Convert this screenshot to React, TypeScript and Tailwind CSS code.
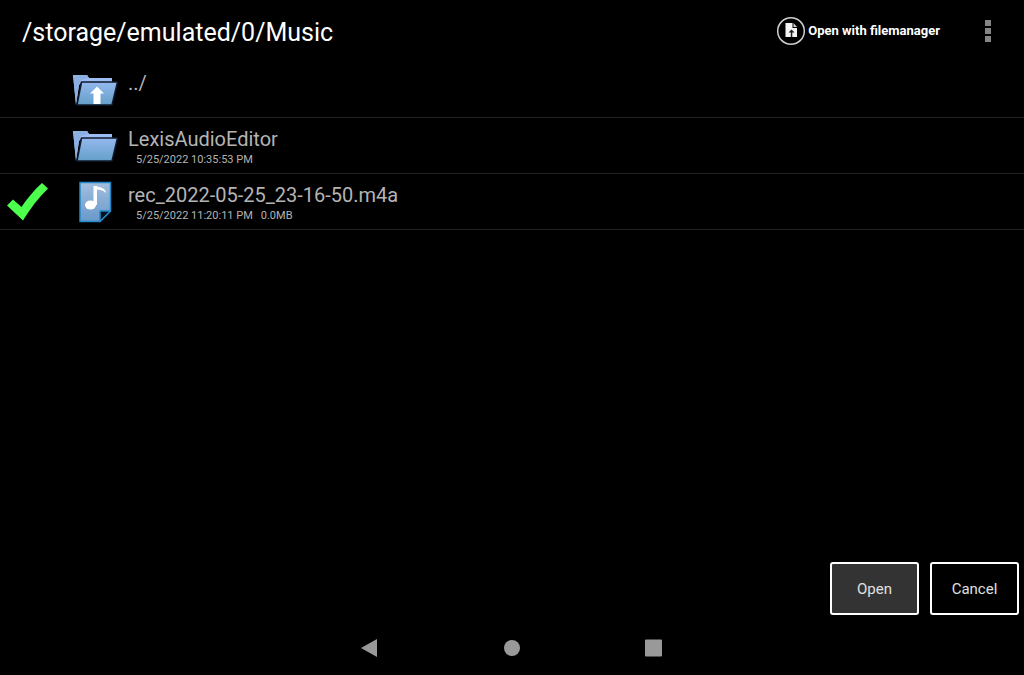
import type { ReactNode } from "react";

type Entry = {
  name: string;
  date?: string;
  size?: string;
  kind: "up" | "folder" | "audio";
  selected?: boolean;
};

const entries: Entry[] = [
  { name: "../", kind: "up" },
  { name: "LexisAudioEditor", date: "5/25/2022 10:35:53 PM", kind: "folder" },
  {
    name: "rec_2022-05-25_23-16-50.m4a",
    date: "5/25/2022 11:20:11 PM",
    size: "0.0MB",
    kind: "audio",
    selected: true,
  },
];

function FolderIcon({ up = false }: { up?: boolean }) {
  const id = up ? "folder-up" : "folder";
  return (
    <svg viewBox="0 0 46 34" className="h-[34px] w-[46px]" aria-hidden="true">
      <defs>
        <linearGradient id={id} x1="0" y1="0" x2="0" y2="1">
          <stop offset="0" stopColor="#94b8ee" />
          <stop offset="1" stopColor="#64a0c8" />
        </linearGradient>
      </defs>
      <path d="M1 2h14l2 3h23v4H10L7 12 4 32Z" fill="#9bbdf3" />
      <path d="M1 2 4 32l3-20 2-5 8-2-2-3Z" fill="#8db0e2" />
      <path d="M9.500 9H45.500L40 32H5Z" fill={`url(#${id})`} stroke="#111a2c" strokeWidth="1.500" strokeLinejoin="round" />
      {up && <path d="M25 13.500 32 20.500H28.500V31h-7V20.500H18Z" fill="#fff" />}
    </svg>
  );
}

function AudioIcon() {
  return (
    <svg viewBox="0 0 34 42" className="h-[42px] w-[34px]" aria-hidden="true">
      <defs>
        <linearGradient id="audio" x1="0" y1="0" x2="0" y2="1">
          <stop offset="0" stopColor="#a3bfdf" />
          <stop offset="1" stopColor="#6898cb" />
        </linearGradient>
      </defs>
      <path d="M2 1.500h30.500V30L22 40.500H2Z" fill="url(#audio)" stroke="#2588c8" strokeWidth="1.500" />
      <path d="M22 40.500V30h10.500Z" fill="#07121f" stroke="#2588c8" strokeWidth="1.500" strokeLinejoin="round" />
      <ellipse cx="12.500" cy="24" rx="5.500" ry="4.500" fill="#fff" />
      <path d="M15.500 5h3c3 2 9 1 9.500 7-3-3-6-3.500-9-3.500V24h-3.500Z" fill="#fff" />
    </svg>
  );
}

function CheckIcon() {
  return (
    <svg viewBox="0 0 42 40" className="h-10 w-[42px]" aria-hidden="true">
      <path d="M1 23.500l6-6 8.500 7.500C21 17 28 8 36 1l6 5.500C32 16 24 27 17 38.500Z" fill="#4dff4d" />
    </svg>
  );
}

function FileUploadIcon() {
  return (
    <svg viewBox="0 0 30 30" className="size-[30px]" aria-hidden="true">
      <circle cx="15" cy="15" r="13.300" fill="none" stroke="#d0d0d0" strokeWidth="1.500" />
      <path d="M9.500 7h7v5H21v9H9.500Z" fill="#f5f5f5" />
      <path d="M17.500 7l3.500 4h-3.500Z" fill="#d8d8d8" />
      <path d="M15.500 13.500l-3 3h2.300V21h1.500v-4.500h2.300Z" fill="#202020" />
    </svg>
  );
}

function NavButton({ label, children }: { label: string; children: ReactNode }) {
  return (
    <button type="button" aria-label={label} className="flex w-[142px] items-center justify-center">
      <svg viewBox="0 0 18 18" className="size-[18px]" fill="#999999" aria-hidden="true">
        {children}
      </svg>
    </button>
  );
}

export default function App() {
  return (
    <div className="flex min-h-screen flex-col bg-black font-['Roboto',sans-serif] text-white">
      <header className="flex h-[62px] items-center justify-between pr-8 pl-[22px]">
        <h1 className="pt-1 text-[25px] leading-8">/storage/emulated/0/Music</h1>
        <div className="flex items-center gap-11">
          <button type="button" className="flex items-center gap-0.5 text-[13px] leading-5 font-bold">
            <FileUploadIcon />
            Open with filemanager
          </button>
          <button type="button" aria-label="More options">
            <svg viewBox="0 0 8 24" className="h-6 w-2" fill="#858585" aria-hidden="true">
              <path d="M1 1h6v6H1ZM1 9h6v6H1ZM1 17h6v6H1Z" />
            </svg>
          </button>
        </div>
      </header>

      <ul className="flex-1">
        {entries.map((entry) => (
          <li key={entry.name} className="border-b border-[#222222]">
            <button type="button" className="flex h-[55px] w-full items-center text-left text-[#b4b4b4]">
              <span className="w-[68px] pl-1.5">{entry.selected && <CheckIcon />}</span>
              <span className="flex w-[60px] items-center pl-1">
                {entry.kind === "audio" ? (
                  <span className="pl-1.5">
                    <AudioIcon />
                  </span>
                ) : (
                  <FolderIcon up={entry.kind === "up"} />
                )}
              </span>
              <span className="flex h-full flex-col pt-2">
                <span className="text-[20px] leading-[26px]">{entry.name}</span>
                {entry.date && (
                  <span className="flex gap-2 pl-2 text-[11px] leading-4">
                    <span>{entry.date}</span>
                    {entry.size && <span>{entry.size}</span>}
                  </span>
                )}
              </span>
            </button>
          </li>
        ))}
      </ul>

      <div className="flex justify-end gap-[11px] px-[5px] pb-1.5 text-[15px] text-[#e0e0e0]">
        <button type="button" className="h-[53px] w-[89px] rounded-[3px] border-2 border-white bg-[#333333] pt-0.5">
          Open
        </button>
        <button type="button" className="h-[53px] w-[89px] rounded-[3px] border-2 border-white pt-0.5">
          Cancel
        </button>
      </div>

      <nav className="flex h-[54px] justify-center">
        <NavButton label="Back">
          <path d="M0 9 16 0v18Z" />
        </NavButton>
        <NavButton label="Home">
          <circle cx="9" cy="9" r="8" />
        </NavButton>
        <NavButton label="Recent apps">
          <rect x="0" y="0.500" width="17" height="17" rx="1" />
        </NavButton>
      </nav>
    </div>
  );
}
